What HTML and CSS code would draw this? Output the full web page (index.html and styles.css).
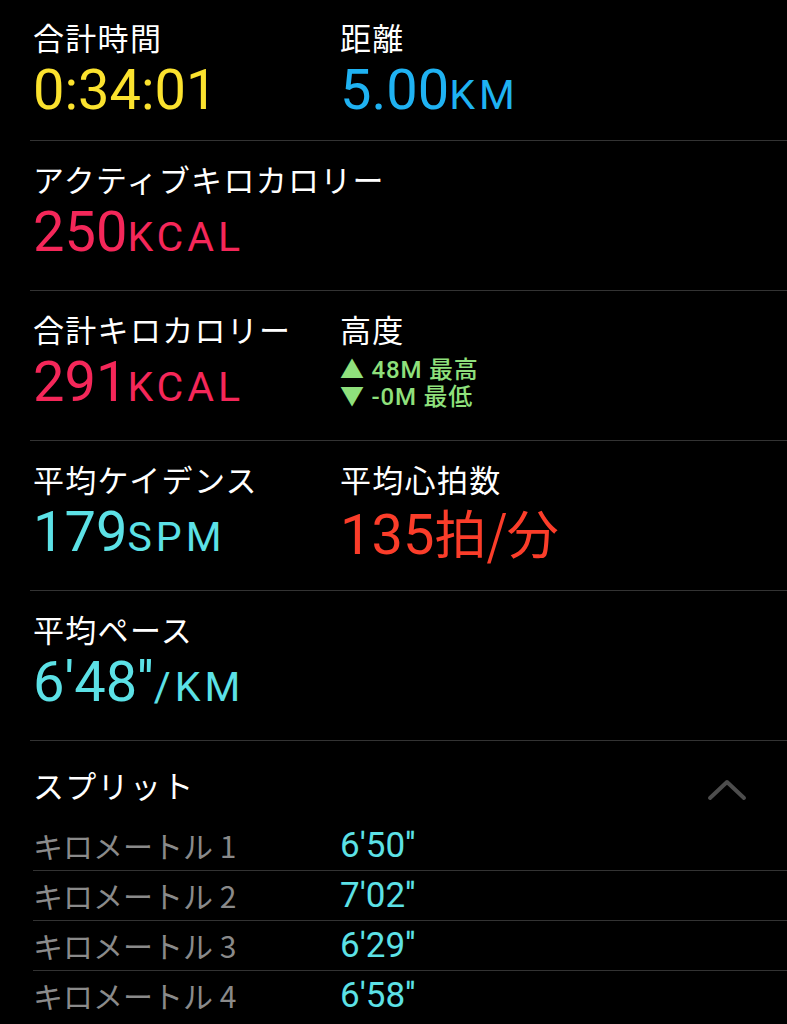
FILE: index.html
```html
<!doctype html>
<html lang="ja">
  <head>
    <meta charset="utf-8">
    <title>ワークアウト</title>
    <link rel="stylesheet" href="styles.css">
  </head>
  <body>
    <section class="metric-row first">
      <div class="metric">
        <div class="label">合計時間</div>
        <div class="value yellow">0:34:01</div>
      </div>
      <div class="metric">
        <div class="label">距離</div>
        <div class="value blue">5.00<span class="unit">KM</span></div>
      </div>
    </section>

    <section class="metric-row">
      <div class="metric">
        <div class="label">アクティブキロカロリー</div>
        <div class="value pink">250<span class="unit">KCAL</span></div>
      </div>
    </section>

    <section class="metric-row">
      <div class="metric">
        <div class="label">合計キロカロリー</div>
        <div class="value pink">291<span class="unit">KCAL</span></div>
      </div>
      <div class="metric">
        <div class="label">高度</div>
        <div class="elevation">
          <div>▲ 48M 最高</div>
          <div>▼ -0M 最低</div>
        </div>
      </div>
    </section>

    <section class="metric-row">
      <div class="metric">
        <div class="label">平均ケイデンス</div>
        <div class="value cyan">179<span class="unit">SPM</span></div>
      </div>
      <div class="metric">
        <div class="label">平均心拍数</div>
        <div class="value red">135<span class="cjk-unit">拍/分</span></div>
      </div>
    </section>

    <section class="metric-row">
      <div class="metric">
        <div class="label">平均ペース</div>
        <div class="value cyan">6'48''<span class="unit">/KM</span></div>
      </div>
    </section>

    <section class="splits">
      <div class="splits-header">
        <div class="label">スプリット</div>
        <svg class="chevron" width="40" height="22" viewBox="0 0 40 22">
          <polyline points="3,19 20,3 37,19" />
        </svg>
      </div>
      <div class="split"><span class="split-name">キロメートル 1</span><span class="split-time">6'50''</span></div>
      <div class="split"><span class="split-name">キロメートル 2</span><span class="split-time">7'02''</span></div>
      <div class="split"><span class="split-name">キロメートル 3</span><span class="split-time">6'29''</span></div>
      <div class="split"><span class="split-name">キロメートル 4</span><span class="split-time">6'58''</span></div>
    </section>
  </body>
</html>
```

FILE: styles.css
```css
body {
  margin: 0;
  background: #000;
  color: #fff;
  font-family: "Noto Sans CJK JP", sans-serif;
  overflow: hidden;
}

.metric-row {
  display: grid;
  grid-template-columns: 307px 1fr;
  height: 149px;
  margin-left: 30px;
  padding-left: 3px;
  border-bottom: 1px solid #333;
}

.metric-row.first {
  height: 140px;
}

.metric {
  padding-top: 17px;
}

.metric-row:not(.first) .metric {
  padding-top: 18px;
}

.label {
  font-size: 31px;
  line-height: 40px;
  letter-spacing: 1.3px;
  color: #fff;
  white-space: nowrap;
}

.value {
  font-family: Roboto, "Noto Sans CJK JP", sans-serif;
  font-size: 56px;
  line-height: 56px;
  margin-top: 5px;
  white-space: nowrap;
}

.unit {
  font-size: 41px;
  letter-spacing: 4px;
}

.cjk-unit {
  font-family: "Noto Sans CJK JP", sans-serif;
  font-size: 52px;
}

.yellow { color: #fbe22e; }
.blue { color: #1fb2f2; }
.pink { color: #f42759; }
.cyan { color: #5ce1e6; }
.red { color: #fb3d2a; }

.elevation {
  font-family: Roboto, "Noto Sans CJK JP", sans-serif;
  font-weight: 500;
  font-size: 24px;
  line-height: 27px;
  letter-spacing: 0.8px;
  color: #8fe07c;
  padding-top: 8px;
}

.splits {
  margin-left: 33px;
}

.splits-header {
  display: flex;
  justify-content: space-between;
  align-items: center;
  padding-top: 8px;
  padding-right: 40px;
  height: 72px;
}

.chevron {
  margin-top: 10px;
}

.chevron polyline {
  fill: none;
  stroke: #4d4d4d;
  stroke-width: 4;
  stroke-linecap: round;
  stroke-linejoin: round;
}

.split {
  display: grid;
  grid-template-columns: 307px 1fr;
  height: 49px;
  line-height: 49px;
  border-bottom: 1px solid #333;
}

.split:last-child {
  border-bottom: none;
}

.split-name {
  font-size: 30px;
  color: #8a8a8a;
}

.split-time {
  font-family: Roboto, sans-serif;
  font-size: 35px;
  color: #5ce1e6;
}
```
